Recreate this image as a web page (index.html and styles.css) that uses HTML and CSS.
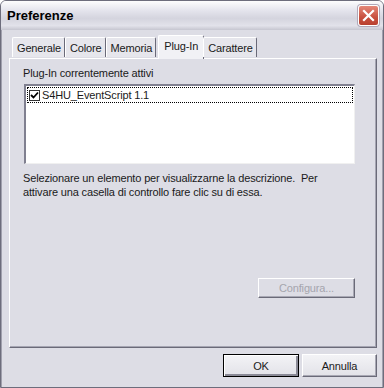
FILE: index.html
```html
<!DOCTYPE html>
<html lang="it">

<head>
  <meta charset="UTF-8">
  <title>Preferenze</title>
  <link rel="stylesheet" href="styles.css">
</head>

<body>
  <div class="window">
    <header class="titlebar">
      <span class="title">Preferenze</span>
      <button class="close-btn" aria-label="Chiudi">
        <svg width="13" height="13" viewBox="0 0 13 13">
          <path d="M2 2 L11 11 M11 2 L2 11" stroke="#fff" stroke-width="2.2" stroke-linecap="square"/>
        </svg>
      </button>
    </header>

    <main class="dialog">
      <nav class="tabs">
        <span class="tab">Generale</span>
        <span class="tab">Colore</span>
        <span class="tab">Memoria</span>
        <span class="tab tab-active">Plug-In</span>
        <span class="tab">Carattere</span>
      </nav>

      <section class="panel">
        <p class="list-label">Plug-In correntemente attivi</p>
        <ul class="plugin-list">
          <li class="plugin-item">
            <span class="check">
              <svg width="9" height="9" viewBox="0 0 9 9">
                <path d="M1 4 L3.5 6.5 L8 1.5" stroke="#000" stroke-width="1.8" fill="none"/>
              </svg>
            </span>
            S4HU_EventScript 1.1
          </li>
        </ul>
        <p class="hint">
          Selezionare un elemento per visualizzarne la descrizione.&nbsp; Per<br>
          attivare una casella di controllo fare clic su di essa.
        </p>
        <div class="panel-actions">
          <button class="btn btn-disabled">Configura...</button>
        </div>
      </section>

      <footer class="dialog-buttons">
        <button class="btn btn-default">OK</button>
        <button class="btn">Annulla</button>
      </footer>
    </main>
  </div>
</body>

</html>
```

FILE: styles.css
```css
/* ---- General ---- */

:root {
  --face: #dddde5;
  --text: #1a1a1a;
}

body {
  margin: 0;
  background: #fff;
  font-family: "Liberation Sans", Arial, sans-serif;
  font-size: 11px;
  letter-spacing: -0.15px;
  color: var(--text);
}

.window {
  width: 384px;
  height: 388px;
  box-sizing: border-box;
  border: 1px solid #6d6d7c;
  border-radius: 6px 6px 0 0;
  background: var(--face);
  overflow: hidden;
}

/* ---- Title bar ---- */

.titlebar {
  height: 29px;
  display: flex;
  align-items: center;
  justify-content: space-between;
  padding: 0 4px 0 6px;
  box-sizing: border-box;
  background: linear-gradient(#fdfdfd 0%, #e6e6ee 30%, #d4d4de 60%, #e2e2ea 85%, #c6c6d0 100%);
}

.title {
  font-size: 13px;
  font-weight: bold;
  letter-spacing: 0;
  color: #000;
}

.close-btn {
  width: 21px;
  height: 21px;
  padding: 0;
  display: flex;
  align-items: center;
  justify-content: center;
  border: 1px solid #fff;
  border-radius: 3px;
  background: linear-gradient(#e5897a, #c8503f 60%, #b9402f);
  box-shadow: 0 0 0 1px #b0a8b8;
}

/* ---- Dialog ---- */

.dialog {
  padding: 5px 5px 0 7px;
  border-left: 1px solid #a0a0ad;
  border-right: 1px solid #a0a0ad;
  height: 357px;
  box-sizing: border-box;
  display: flex;
  flex-direction: column;
}

.tabs {
  display: flex;
  align-items: flex-end;
  padding-left: 3px;
  height: 23px;
  position: relative;
  z-index: 1;
}

.tab {
  height: 20px;
  padding: 0 3px 0 4px;
  display: flex;
  align-items: center;
  box-sizing: border-box;
  background: #e6e6ec;
  border-top: 1px solid #fff;
  border-left: 1px solid #fff;
  border-right: 1px solid #6a6a78;
  border-radius: 2px 2px 0 0;
  margin-bottom: 1px;
}

.tab-active {
  height: 24px;
  margin: 0 -1px -1px 2px;
  padding: 0 5px 4px;
  background: #f1f1f5;
}

.panel {
  height: 290px;
  box-sizing: border-box;
  padding: 8px 21px 0 13px;
  border-top: 1px solid #fff;
  border-left: 1px solid #fff;
  border-right: 1px solid #6a6a78;
  border-bottom: 1px solid #6a6a78;
  box-shadow: inset -1px -1px 0 #a5a5b2;
}

.list-label {
  margin: 0 0 5px;
}

.plugin-list {
  list-style: none;
  margin: 0 0 0 1px;
  padding: 1px;
  height: 80px;
  box-sizing: border-box;
  background: #fff;
  border-top: 2px solid #808090;
  border-left: 2px solid #808090;
  border-right: 1px solid #f0f0f0;
  border-bottom: 1px solid #f0f0f0;
}

.plugin-item {
  display: flex;
  align-items: center;
  gap: 2px;
  height: 14px;
  padding-left: 1px;
  border: 1px dotted #000;
}

.check {
  width: 9px;
  height: 9px;
  border: 1px solid #333;
  display: flex;
  align-items: center;
  justify-content: center;
  background: #fff;
}

.hint {
  margin: 7px 0 0;
  line-height: 14px;
}

.panel-actions {
  display: flex;
  justify-content: flex-end;
  margin-top: 79px;
}

/* ---- Buttons ---- */

.btn {
  font-family: "Liberation Sans", Arial, sans-serif;
  font-size: 11px;
  letter-spacing: -0.15px;
  color: var(--text);
  width: 75px;
  height: 23px;
  padding: 0;
  background: linear-gradient(#f3f3f6, #e2e2e8);
  border: 1px solid #fff;
  border-right-color: #6a6a78;
  border-bottom-color: #6a6a78;
  box-shadow: inset -1px -1px 0 #a8a8b4;
}

.btn-disabled {
  width: 97px;
  height: 20px;
  color: #a5a5ad;
  background: var(--face);
}

.btn-default {
  width: 76px;
  border: 1px solid #000;
  box-shadow: inset 1px 1px 0 #fff, inset -2px -2px 0 #8a8a96;
}

.dialog-buttons {
  display: flex;
  justify-content: flex-end;
  gap: 3px;
  padding: 6px 0 0;
}
```
